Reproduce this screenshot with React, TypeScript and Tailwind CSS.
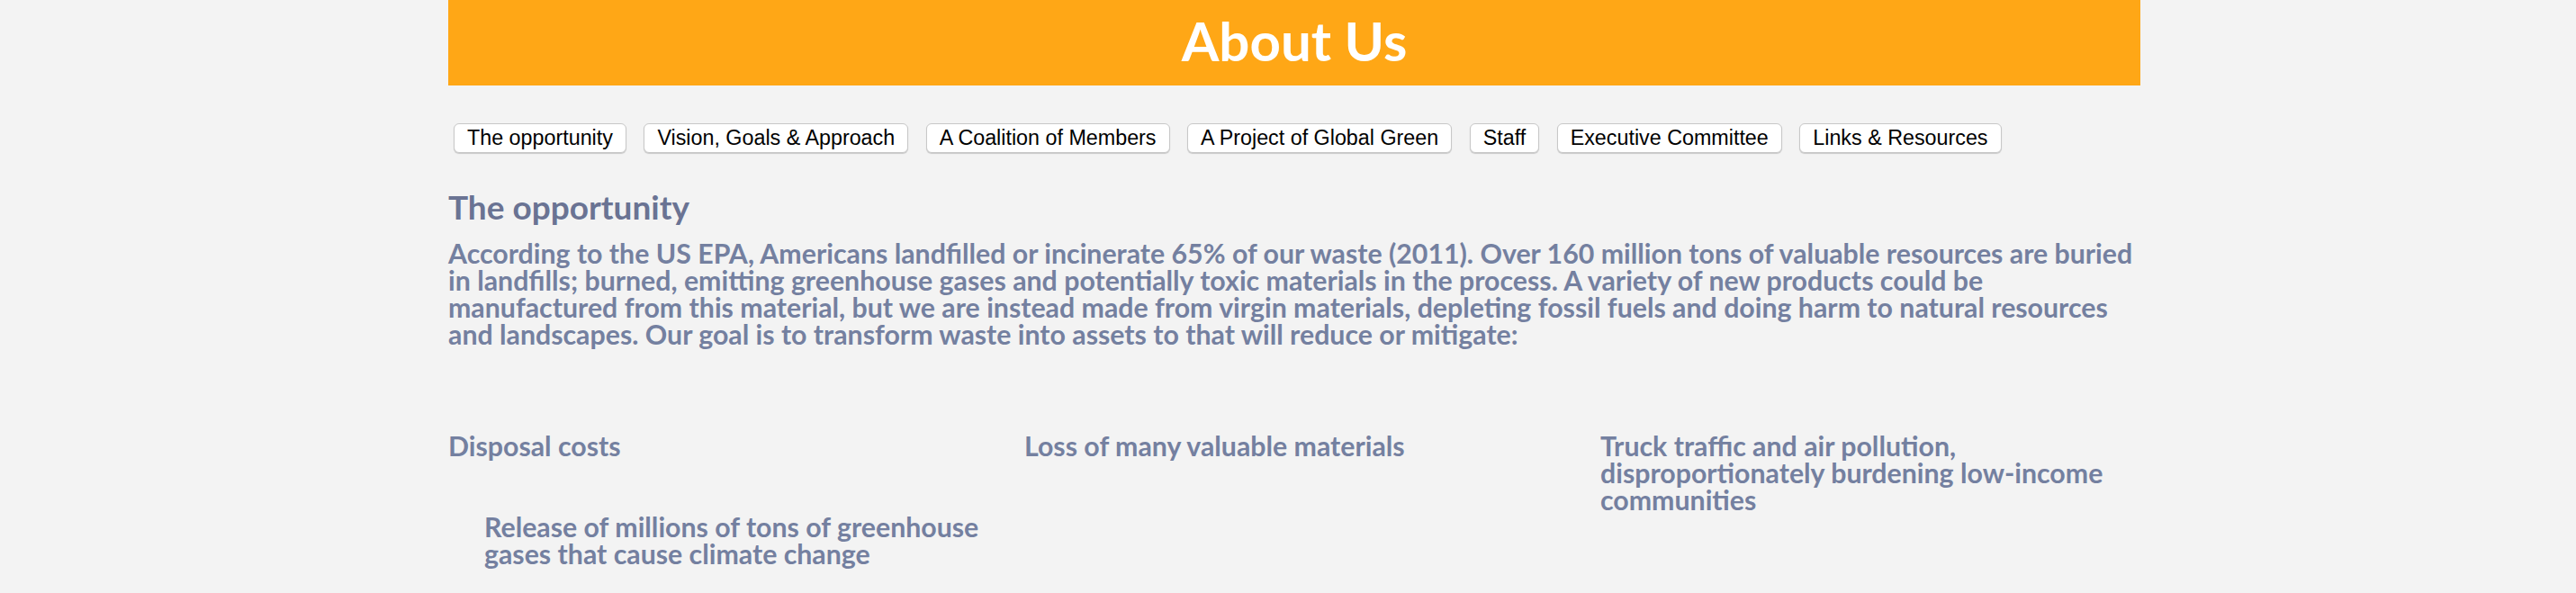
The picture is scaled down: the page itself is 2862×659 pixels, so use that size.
import React from 'react';

const tabs = [
  'The opportunity',
  'Vision, Goals & Approach',
  'A Coalition of Members',
  'A Project of Global Green',
  'Staff',
  'Executive Committee',
  'Links & Resources',
];

const impacts = [
  { text: 'Disposal costs', indent: false },
  { text: 'Loss of many valuable materials', indent: false },
  { text: 'Truck traffic and air pollution, disproportionately burdening low-income communities', indent: false },
  { text: 'Release of millions of tons of greenhouse gases that cause climate change', indent: true },
];

export default function App() {
  return (
    <div className="min-h-[659px] bg-[#f3f3f3] font-['Lato','Open_Sans',sans-serif]">
      <div className="ml-[498px] w-[1880px]">
        <div className="h-[95px] bg-[#ffa716] flex items-center justify-center pb-[6px]">
          <h1 className="text-[60px] leading-none font-bold text-white">About Us</h1>
        </div>

        <div className="flex items-center gap-[19.5px] pl-[6px] mt-[42px]">
          {tabs.map((tab) => (
            <button
              key={tab}
              className="h-[33px] px-[14px] bg-white border border-[#c8c8c8] rounded-[6px] shadow-[0_1px_1px_rgba(0,0,0,0.18)] font-['Liberation_Sans',Arial,sans-serif] text-[23.3px] leading-none text-black whitespace-nowrap"
            >
              {tab}
            </button>
          ))}
        </div>

        <h2 className="mt-[38px] text-[37px] leading-[1.2] font-bold text-[#6a7393]">The opportunity</h2>
        <p className="mt-[14px] text-[30.3px] leading-[30px] font-bold text-[#7480a0]">
          According to the US EPA, Americans landfilled or incinerate 65% of our waste (2011). Over 160 million tons of valuable resources are buried in landfills; burned, emitting greenhouse gases and potentially toxic materials in the process. A variety of new products could be manufactured from this material, but we are instead made from virgin materials, depleting fossil fuels and doing harm to natural resources and landscapes. Our goal is to transform waste into assets to that will reduce or mitigate:
        </p>

        <ul className="mt-[94px] grid grid-cols-3 gap-x-[40px]">
          {impacts.map((item) => (
            <li
              key={item.text}
              className={`text-[30.3px] leading-[30px] font-bold text-[#7480a0] ${item.indent ? 'pl-[40px]' : ''}`}
            >
              {item.text}
            </li>
          ))}
        </ul>
      </div>
    </div>
  );
}
